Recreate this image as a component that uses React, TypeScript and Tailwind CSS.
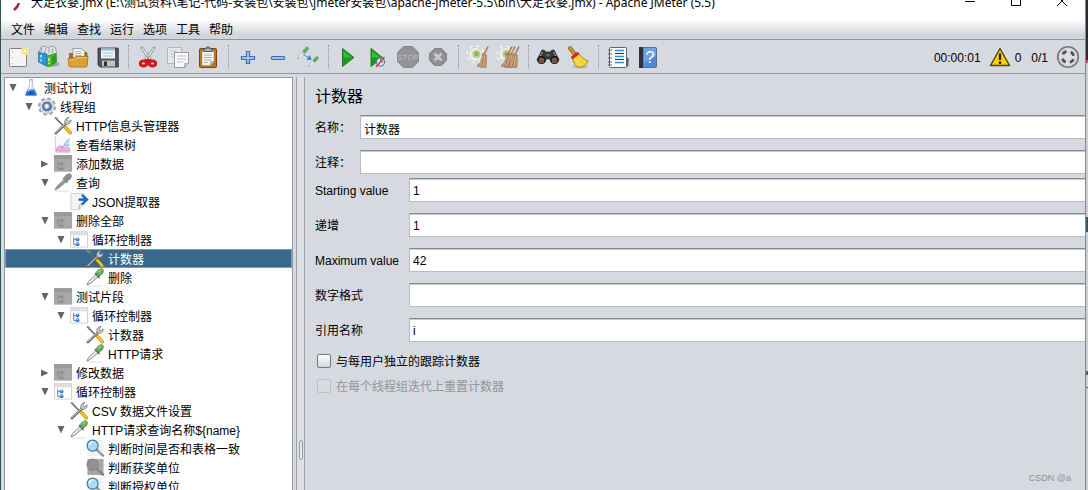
import { useState } from "react";
import type { ReactNode } from "react";
import clsx from "clsx";

type NodeIcon =
  | "flask" | "gear" | "tools" | "chart" | "folderOff" | "pipette" | "pipetteOff"
  | "extract" | "loop" | "assert" | "assertOff";

interface TreeNode {
  id: number;
  level: number;
  label: string;
  icon: NodeIcon;
  toggle?: "open" | "closed";
}

const NODES: TreeNode[] = [
  { id: 1, level: 0, label: "测试计划", icon: "flask", toggle: "open" },
  { id: 2, level: 1, label: "线程组", icon: "gear", toggle: "open" },
  { id: 3, level: 2, label: "HTTP信息头管理器", icon: "tools" },
  { id: 4, level: 2, label: "查看结果树", icon: "chart" },
  { id: 5, level: 2, label: "添加数据", icon: "folderOff", toggle: "closed" },
  { id: 6, level: 2, label: "查询", icon: "pipetteOff", toggle: "open" },
  { id: 7, level: 3, label: "JSON提取器", icon: "extract" },
  { id: 8, level: 2, label: "删除全部", icon: "folderOff", toggle: "open" },
  { id: 9, level: 3, label: "循环控制器", icon: "loop", toggle: "open" },
  { id: 10, level: 4, label: "计数器", icon: "tools" },
  { id: 11, level: 4, label: "删除", icon: "pipette" },
  { id: 12, level: 2, label: "测试片段", icon: "folderOff", toggle: "open" },
  { id: 13, level: 3, label: "循环控制器", icon: "loop", toggle: "open" },
  { id: 14, level: 4, label: "计数器", icon: "tools" },
  { id: 15, level: 4, label: "HTTP请求", icon: "pipette" },
  { id: 16, level: 2, label: "修改数据", icon: "folderOff", toggle: "closed" },
  { id: 17, level: 2, label: "循环控制器", icon: "loop", toggle: "open" },
  { id: 18, level: 3, label: "CSV 数据文件设置", icon: "tools" },
  { id: 19, level: 3, label: "HTTP请求查询名称${name}", icon: "pipette", toggle: "open" },
  { id: 20, level: 4, label: "判断时间是否和表格一致", icon: "assert" },
  { id: 21, level: 4, label: "判断获奖单位", icon: "assertOff" },
  { id: 22, level: 4, label: "判断授权单位", icon: "assert" },
];

const MENUS = ["文件", "编辑", "查找", "运行", "选项", "工具", "帮助"];

/* ---------- tree icons ---------- */

function Pipette({ off }: { off?: boolean }) {
  return (
    <>
      <path d="M2 19h15" stroke="#dcdcdc" />
      <path d="M1.500 18 3 14.500 11.500 6.500l2.300 2.300L5.500 16z" fill={off ? "#979797" : "#d5dada"} stroke={off ? "#939393" : "#7b8080"} strokeWidth=".9" />
      {!off && <path d="M4 15.500 12 8" stroke="#fff" />}
      <path d="M10 5.500 14.800 10.300" stroke={off ? "#8b8b8b" : "#5f6b5f"} strokeWidth="1.800" />
      <path d="M11 5.600c1-2.800 3-4.600 5.400-4.900 1.800 0 2.800 1.200 2.500 2.900-.4 2-2.200 3.800-4.600 5.100z" fill={off ? "#8b8b8b" : "#6aa95c"} stroke={off ? "#858585" : "#55914a"} strokeWidth=".7" />
      {!off && <path d="M13.500 4.500c1-1.200 2-1.800 3.200-2" stroke="#aadb9a" strokeWidth="1.200" />}
    </>
  );
}

function Folder({ off }: { off?: boolean }) {
  const main = off ? "#a9a9a9" : "#fdfdfd";
  const node = off ? "#8a8a8a" : "#3b7fd6";
  return (
    <>
      <rect x="1" y="1.500" width="18" height="16.500" fill={main} stroke={off ? "#a0a0a0" : "#d0d0d0"} />
      <rect x="1" y="1.500" width="18" height="4" fill={off ? "#999" : "#dcdcdc"} />
      {!off && <path d="M11 3.500h1m2 0h1m2 0h1" stroke="#fff" />}
      <path d="M4.500 7v8.500H7M4.500 10H7" fill="none" stroke={off ? "#8a8a8a" : "#777"} />
      <circle cx="8.500" cy="10" r="2" fill={node} />
      <circle cx="8.500" cy="15" r="2" fill={node} />
      <path d="M7.500 9.200h1.500M7.500 14.200h1.500" stroke={off ? "#b8b8b8" : "#a9d0ff"} />
    </>
  );
}

function Magnifier({ off }: { off?: boolean }) {
  return (
    <>
      <rect x="2" y="1" width="17" height="17" fill={off ? "#a6a6a6" : "#f1f1f1"} />
      <path d="m12 11.500 6.500 6" stroke={off ? "#858585" : "#8d8d8d"} strokeWidth="2.600" strokeLinecap="round" />
      {!off && <path d="m13 12 5 5" stroke="#d0d0d0" strokeWidth=".8" />}
      <circle cx="7.500" cy="7" r="5.800" fill={off ? "#929292" : "#a4dcfa"} stroke={off ? "#858585" : "#44719e"} strokeWidth="1.200" />
      {!off && <path d="M4 7c0-2.500 1.500-3.800 4-4" fill="none" stroke="#e9f8ff" strokeWidth="1.600" />}
    </>
  );
}

const TREE_ICONS: Record<NodeIcon, ReactNode> = {
  flask: (
    <>
      <path d="M8 1.500h4M8.500 2v6L4 17.500q0 1 1 1h10q1 0 1-1L11.500 8V2z" fill="#e6edf5" stroke="#a3afbd" strokeWidth=".8" />
      <path d="M6.700 11.500h6.700l2.600 6q0 1-.8 1H5q-1 0-.8-1z" fill="#2279d4" />
      <path d="M6.700 11.500h6.700l.6 1.500H6z" fill="#79b7f3" />
      <ellipse cx="10" cy="16" rx="3" ry="1.500" fill="#1556ab" />
      <path d="M9.500 3v6L7 14" fill="none" stroke="#fff" />
    </>
  ),
  gear: (
    <>
      <circle cx="10" cy="10" r="8" fill="none" stroke="#a3a8b0" strokeWidth="3.200" strokeDasharray="3.600 2.683" />
      <circle cx="10" cy="10" r="7.500" fill="#dcdee3" stroke="#b0b4bb" strokeWidth=".8" />
      <circle cx="10" cy="10" r="4.500" fill="#6d8bb8" stroke="#3f5c8a" strokeWidth="1.200" />
      <circle cx="9.500" cy="9.500" r="2.400" fill="#c9d7ed" />
      <path d="m8.800 7.500 3.400 2.500-3.400 2.500z" fill="#fff" />
    </>
  ),
  tools: (
    <>
      <path d="m2 2 9 9" stroke="#6a6a6a" strokeWidth="1.600" />
      <path d="m1.500 1.500 3 2" stroke="#8d8d8d" strokeWidth="2" />
      <path d="M2.500 18 14 7" stroke="#5c5c5c" strokeWidth="2.800" strokeLinecap="round" />
      <path d="M2.500 17.500 14 6.500" stroke="#c4c4c4" strokeWidth="1.200" strokeLinecap="round" />
      <path d="M12.500 8.500c-2-3 .5-7 4-7L14.300 4l1.700 2 2.500-2c.7 3.300-2.700 5.800-6 4.500z" fill="#c6c6c6" stroke="#7a7a7a" strokeWidth=".8" />
      <path d="m12.500 12 5 5.500" stroke="#a77d00" strokeWidth="3.600" strokeLinecap="round" />
      <path d="m12.500 12 5 5.500" stroke="#f5c31d" strokeWidth="2.500" strokeLinecap="round" />
    </>
  ),
  chart: (
    <>
      <rect x="2" y="1" width="16" height="17" fill="#f8f8fc" />
      <path d="M2 1v17.500h16" fill="none" stroke="#a9a9b8" strokeDasharray="1 1" />
      <path d="M3 17v-3l4-3 3 2.500 3-3 4 4V17z" fill="#efb0de" stroke="#d17cbf" strokeWidth=".8" />
      <path d="M10 12c3-2 3-6 7-7v7l-2 1z" fill="#d3e0fb" />
      <path d="M8 13.500c4-1 4-8 9-9M12.500 10.500q2 2 4-1" fill="none" stroke="#7f9bdc" strokeWidth="1" />
    </>
  ),
  folderOff: <Folder off />,
  loop: <Folder />,
  pipette: <Pipette />,
  pipetteOff: <Pipette off />,
  assert: <Magnifier />,
  assertOff: <Magnifier off />,
  extract: (
    <>
      <path d="M1.500 1.500h14v11l-5 6h-9z" fill="#f3f3f3" stroke="#cecece" />
      <path d="m10 18.500.5-5 4.500-1" fill="#e4e4e4" stroke="#b4b4b4" />
      <path d="M9.500 8h7" stroke="#1768bd" strokeWidth="2.600" />
      <path d="m13 3 5.500 5-5.500 5" fill="none" stroke="#1768bd" strokeWidth="2.400" />
    </>
  ),
};

/* ---------- toolbar icons ---------- */

function Broom({ x = 0 }: { x?: number }) {
  return (
    <g transform={`translate(${x} 0)`}>
      <path d="m19 1.500-4 8" stroke="#a87845" strokeWidth="1.500" />
      <path d="m13.500 8.500 4 1.500-.5 12.500q-5 .5-9-1.500c3.500-3 5-7 5.500-12.500z" fill="#b8926c" stroke="#98734f" strokeWidth=".6" />
      <path d="M14 11 11 21M15.500 11l-1.500 10.500" stroke="#d8b891" strokeWidth=".9" />
      <path d="m14.800 11-2.500 10" stroke="#8d673f" strokeWidth=".6" />
    </g>
  );
}

function PaleGear() {
  return (
    <>
      <circle cx="9.500" cy="9.500" r="7.500" stroke="#f5f6f5" strokeWidth="3" strokeDasharray="3.400 2.490" />
      <circle cx="9.500" cy="9.500" r="7.200" fill="#eceeec" stroke="#bdbfbd" strokeWidth=".7" />
      <circle cx="10.500" cy="9" r="3.600" fill="#cfe3b5" stroke="#9fa59a" strokeWidth=".7" />
      <circle cx="10.500" cy="9" r="2.400" fill="#7cc52d" />
    </>
  );
}

const TOOLS: { title: string; disabled?: boolean; art: ReactNode }[][] = [
  [
    {
      title: "新建",
      art: (
        <>
          <rect x="3.500" y="3.500" width="17" height="18" rx="1" fill="#f5f5f5" stroke="#7d7f82" />
          <path d="M6.500 6v1m0 5v1m0 5v1" stroke="#b5b5b5" />
          <circle cx="19" cy="6" r="4" fill="#f3eba0" />
          <circle cx="19" cy="6" r="2" fill="#fffef0" stroke="#ecd94c" />
        </>
      ),
    },
    {
      title: "模板",
      art: (
        <>
          <ellipse cx="17" cy="19" rx="6.500" ry="2.500" fill="#9da1a8" />
          <path d="m3 8 2-6 5-1 2 2 3-2 4 1 2 6-9 4z" fill="#dfe4e6" stroke="#8e959a" strokeWidth=".8" />
          <path d="m6 3-1 4m5-4-1 4m4-4v5m4-5-1 5" stroke="#98a0a5" />
          <path d="m2.500 7 4.500 1.500 1-1 3 1.500v12l-3-1-5.500-3z" fill="#2797d9" stroke="#1a73ad" strokeWidth=".7" />
          <path d="M5 10v2.500m0 2v2" stroke="#d9effb" strokeWidth="1.500" />
          <path d="m11 11 4.500-1.500L20 8.500l.5 8-6 5H11z" fill="#4fbf30" stroke="#2b8c1d" strokeWidth=".7" />
          <path d="m15.500 12 5-3.500v8.500l-5 4z" fill="#2f9c20" />
          <path d="M13 13v3m0 1.500v1.500" stroke="#e0f7d8" strokeWidth="1.300" />
        </>
      ),
    },
    {
      title: "打开",
      art: (
        <>
          <path d="M3.500 8.500h4l1-1H20q1 0 1 1V20H3.500z" fill="#a66f13" stroke="#875707" strokeWidth=".7" />
          <path d="M7 3.500h8l3.500 3V13H7z" fill="#f5f5f5" stroke="#8e8e8e" strokeWidth=".8" />
          <path d="M9 6.500h6m-6 2h7m-7 2h7" stroke="#b6b6b6" />
          <path d="M2 13.500h6l1.500-2H22l-1 9.500q0 1-1 1H4q-1 0-1-1z" fill="#dea035" stroke="#a8730f" strokeWidth=".8" />
          <path d="M3 14.700h5.500l1.500-2h10.500" stroke="#f3c775" />
        </>
      ),
    },
    {
      title: "保存",
      art: (
        <>
          <path d="M3 3h18.500q.8 0 .8.8V22H4l-2-2V3.800Q2 3 3 3z" fill="#505358" stroke="#2c2e31" strokeWidth=".8" />
          <rect x="5" y="3.500" width="14" height="10" fill="#edf3f8" />
          <path d="M5 4.500h14" stroke="#8bbbe5" strokeWidth="2" />
          <path d="M7 8h10m-10 3h10" stroke="#b0bfcb" />
          <rect x="6" y="15.500" width="13" height="6" fill="#bfc2c6" />
          <rect x="8" y="16.500" width="3" height="4.500" fill="#2e3033" />
        </>
      ),
    },
  ],
  [
    {
      title: "剪切",
      art: (
        <>
          <path d="m4.500 2.500 8.500 13 2.500-1.500L6.500 2z" fill="#ececec" stroke="#858585" strokeWidth=".8" />
          <path d="m19.500 2.500-8.500 13-2.500-1.500L17.500 2z" fill="#e2e2e2" stroke="#858585" strokeWidth=".8" />
          <circle cx="12" cy="12" r=".8" fill="#777" />
          <path d="m8 15 4-1.500 4 1.500-4 2.500z" fill="#d3161e" />
          <ellipse cx="7.500" cy="18.500" rx="3.200" ry="2.600" stroke="#d3161e" strokeWidth="3" />
          <ellipse cx="16.500" cy="18.500" rx="3.200" ry="2.600" stroke="#d3161e" strokeWidth="3" />
        </>
      ),
    },
    {
      title: "复制",
      art: (
        <>
          <path d="M1.500 2.500h14v16h-14z" fill="#e6e8eb" stroke="#a7a9ad" strokeWidth=".8" />
          <path d="M4 6h7m-7 3h5m-5 3h4" stroke="#bfc2c6" />
          <path d="M8.500 7.500h14v11l-4 4h-10z" fill="#fafafa" stroke="#848688" strokeWidth=".8" />
          <path d="M11 11h9m-9 3h9m-9 3h6" stroke="#bdbdbd" />
          <path d="M18.500 22.500v-4h4z" fill="#d4d4d4" stroke="#8a8a8a" strokeWidth=".6" />
        </>
      ),
    },
    {
      title: "粘贴",
      art: (
        <>
          <rect x="3.500" y="3.500" width="17" height="19" rx="1" fill="#b87620" stroke="#77460d" />
          <path d="M6 6h12v10.500l-4 4H6z" fill="#f7f7f7" stroke="#8b8b8b" strokeWidth=".5" />
          <path d="M8 10h8m-8 2.500h8M8 15h7m-7 2.500h4" stroke="#aaa" />
          <path d="M14 20.500v-4h4z" fill="#ccc" stroke="#999" strokeWidth=".5" />
          <path d="M7.500 6.500V4h2l1-2h3l1 2h2v2.500z" fill="#8b8c87" stroke="#50514e" strokeWidth=".8" />
          <path d="M8.500 5h7" stroke="#c5c6c2" />
        </>
      ),
    },
  ],
  [
    {
      title: "展开",
      art: <path d="M10.500 6.500h3v5h5v3h-5v4h-3v-4h-5v-3h5z" fill="#9cc3e8" stroke="#3c6fae" strokeWidth="1.200" />,
    },
    {
      title: "折叠",
      art: <rect x="5.500" y="11.500" width="13" height="3" rx="1" fill="#9cc3e8" stroke="#3c6fae" strokeWidth="1.200" />,
    },
    {
      title: "切换",
      art: (
        <>
          <path d="m3 12 5-5" stroke="#b9c1bb" strokeWidth="2.200" />
          <path d="m3.500 12 5-5" stroke="#f3f5f3" strokeWidth="1.200" />
          <path d="m8.500 6.500 2.500-3" stroke="#6aa865" strokeWidth="3.600" strokeLinecap="round" />
          <path d="m1.500 14 1.500-2" stroke="#9ba09d" />
          <path d="m14 20 4.500-4" stroke="#b9c1bb" strokeWidth="2.200" />
          <path d="m14.500 20 4-4" stroke="#f3f5f3" strokeWidth="1.200" />
          <path d="m18.500 15.500 2.500-2.500" stroke="#6aa865" strokeWidth="3.600" strokeLinecap="round" />
          <path d="m12 22 2-2" stroke="#9ba09d" />
          <path d="m7.500 9.500 6 3.500" stroke="#3d88ec" strokeWidth="1.400" strokeDasharray="2 1" />
          <path d="m10.500 14.500 5 .5-1.500-5z" fill="#2e78e0" />
        </>
      ),
    },
  ],
  [
    {
      title: "启动",
      art: (
        <>
          <path d="M6.500 3.500 18 12.500 6.500 21.500z" fill="#189d1a" stroke="#0d6d12" strokeWidth=".8" />
          <path d="M7.500 6v6.500h8z" fill="#3fb83a" />
        </>
      ),
    },
    {
      title: "不停顿开始",
      art: (
        <>
          <path d="M5 3.500 16.500 12.500 5 21.500z" fill="#189d1a" stroke="#0d6d12" strokeWidth=".8" />
          <path d="M6 6v6.500h8z" fill="#3fb83a" />
          <circle cx="14.500" cy="17" r="4" fill="#dfe9f5" stroke="#5276a5" strokeWidth="1.200" />
          <path d="M14.500 14v3H17" stroke="#555" strokeWidth=".8" />
          <path d="m10 22 8.500-10" stroke="#d2383d" strokeWidth="1.400" />
        </>
      ),
    },
    {
      title: "停止",
      disabled: true,
      art: (
        <>
          <path d="M7.500 1.500h9l6 6v9l-6 6h-9l-6-6v-9z" fill="#919396" stroke="#85878a" />
          <text x="12" y="15" textAnchor="middle" fontSize="8" fontWeight="400" fill="#bfc1c4">STOP</text>
        </>
      ),
    },
    {
      title: "关闭",
      disabled: true,
      art: (
        <>
          <path d="M8.500 3.500h7l5 5v7l-5 5h-7l-5-5v-7z" fill="#8e9093" stroke="#838588" />
          <path d="m8.500 8.500 7 7m0-7-7 7" stroke="#c5c7ca" strokeWidth="2.800" />
        </>
      ),
    },
  ],
  [
    { title: "清除", art: <><PaleGear /><Broom x={3} /></> },
    { title: "清除全部", art: <><PaleGear /><Broom x={-3} /><Broom /><Broom x={4} /></> },
  ],
  [
    {
      title: "查找",
      art: (
        <>
          <path d="M5 7q0-2 2-2t2.500 2h5Q15 5 17 5t2 2l4 8q-3 5-8 2l-1-3h-4l-1 3q-5 3-8-2z" fill="#3b3c40" stroke="#1d1e20" strokeWidth=".7" />
          <circle cx="5.500" cy="15" r="4" fill="#18181a" />
          <circle cx="18.500" cy="15" r="4" fill="#18181a" />
          <circle cx="5.500" cy="15.500" r="2.400" fill="#93461b" stroke="#777" strokeWidth=".8" />
          <circle cx="18.500" cy="15.500" r="2.400" fill="#93461b" stroke="#777" strokeWidth=".8" />
          <path d="m6.500 7-2.500 4m13.500-4 2.500 4m-9.500-1h3" stroke="#a5a5a5" />
        </>
      ),
    },
    {
      title: "重置搜索",
      art: (
        <>
          <ellipse cx="14" cy="21.500" rx="8" ry="1.800" fill="#b5b8bf" />
          <path d="m4 3 4.500 6" stroke="#8c5b16" strokeWidth="4" strokeLinecap="round" />
          <path d="m4 3 4.500 6" stroke="#cf9a43" strokeWidth="2.400" strokeLinecap="round" />
          <path d="m6.500 13 6-4.500c2.500 3.500 6 6 9.500 7.500-1 3.500-4.500 6-9 6.500C9 21 7 17 6.500 13z" fill="#f0d02e" stroke="#ac8500" strokeWidth=".9" />
          <path d="m9 14 4 7m-2-8 5 7m-3-9 6 7" stroke="#f9ec8a" strokeWidth=".8" />
          <path d="m5 12 6.500-5 1.700 2-6.700 5z" fill="#d42a24" stroke="#a31713" strokeWidth=".4" />
        </>
      ),
    },
  ],
  [
    {
      title: "函数助手",
      art: (
        <>
          <path d="M18 17h4.500v4.500H18z" fill="#26912a" />
          <path d="M18 13h4.500v4H18z" fill="#2456af" />
          <rect x="3.500" y="2.500" width="17" height="20" rx="1" fill="#fafafa" stroke="#5d6268" />
          <path d="M2 5h4M2 9h4m-4 4h4m-4 4h4m-4 3h4" stroke="#666" strokeWidth="1.200" />
          <path d="M9 5.500h9M9 11.500h9M9 17.500h9" stroke="#3f87de" strokeWidth="1.400" />
          <path d="M9 8.500h9M9 14.500h9" stroke="#333" />
        </>
      ),
    },
    {
      title: "帮助",
      art: (
        <>
          <rect x="3.500" y="2.500" width="17" height="20" rx="1" fill="#4c8ad6" stroke="#4d6f99" />
          <path d="M3 2h4v21H3z" fill="#2a323e" />
          <path d="M8 3h12v8L8 18z" fill="#6ca3e4" />
          <text x="14" y="18" textAnchor="middle" fontSize="16" fill="#fff">?</text>
        </>
      ),
    },
  ],
];

function Field({ label, value, wide }: { label: string; value?: string; wide?: boolean }) {
  return (
    <label className="flex h-6 items-center">
      <span className={clsx("shrink-0 pt-0.5 whitespace-nowrap", wide ? "w-[94px]" : "w-[45px]")}>{label}</span>
      <input
        type="text"
        defaultValue={value}
        className="h-6 min-w-0 flex-1 border border-r-0 border-[#b8bbc0] border-t-[#85888d] bg-white px-[3px] pt-0.5 shadow-[inset_0_1px_0_#c8cacd] outline-none"
      />
    </label>
  );
}

function Tree() {
  const [selected, setSelected] = useState(10);
  const [closed, setClosed] = useState<number[]>(NODES.filter((n) => n.toggle === "closed").map((n) => n.id));

  function toggle(id: number) {
    setClosed((c) => (c.includes(id) ? c.filter((x) => x !== id) : [...c, id]));
  }

  // drop everything nested below a closed node
  let limit = Infinity;
  const visible = NODES.filter((n) => {
    if (n.level > limit) return false;
    limit = closed.includes(n.id) ? n.level : Infinity;
    return true;
  });

  return (
    <ul className="min-h-0 w-[289px] shrink-0 overflow-hidden border border-b-0 border-[#9297a1] bg-white">
      {visible.map((n) => (
        <li
          key={n.id}
          className={clsx(
            "flex h-[19px] items-center border",
            n.id === selected ? "border-[#6f9fce] bg-[#39698a] text-white" : "border-transparent"
          )}
        >
          <span className="shrink-0" style={{ width: n.level * 16 }} />
          {n.toggle ? (
            <button aria-label={n.label} onClick={() => toggle(n.id)} className="flex w-[15px] shrink-0 justify-center pr-0.5">
              <svg viewBox="0 0 8 8" className={clsx("h-2 w-2", closed.includes(n.id) && "-rotate-90")}>
                <path d="M.5 0h7L4 7.500z" fill="#626468" />
              </svg>
            </button>
          ) : (
            <span className="w-[15px] shrink-0" />
          )}
          <button onClick={() => setSelected(n.id)} className="flex items-center gap-[3px] whitespace-nowrap">
            <svg viewBox="0 0 20 20" className="h-[19px] w-5 shrink-0">{TREE_ICONS[n.icon]}</svg>
            <span className="pt-0.5">{n.label}</span>
          </button>
        </li>
      ))}
    </ul>
  );
}

export default function App() {
  return (
    <div className="flex h-screen overflow-hidden bg-[#d6d9e0] font-['Liberation_Sans','Noto_Sans_CJK_SC',sans-serif] text-xs leading-4 text-black">
      {/* edge of the desktop behind the window */}
      <div className="w-px shrink-0 bg-[#2d5552]" />

      <div className="flex min-w-0 flex-1 flex-col border-r border-[#85888d]">
        <header className="flex h-[17px] shrink-0 items-end justify-between overflow-hidden bg-white">
          <div className="flex min-w-0 items-end gap-2.5 pb-1.5 pl-3 font-['Noto_Sans','Noto_Sans_CJK_SC',sans-serif]">
            <svg viewBox="0 0 8 8" className="h-2 w-2 shrink-0">
              <path d="M6 0 4 4 1 7" fill="none" stroke="#a51b4c" strokeWidth="2.500" />
            </svg>
            <h1 className="whitespace-nowrap">
              大足衣婺.jmx (E:\测试资料\笔记-代码-安装包\安装包\jmeter安装包\apache-jmeter-5.5\bin\大足衣婺.jmx) - Apache JMeter (5.5)
            </h1>
          </div>
          <div className="flex items-end gap-9 pr-[18px] pb-2.5">
            <button aria-label="最小化">
              <svg viewBox="0 0 10 12" className="h-3 w-2.5"><path d="M0 6.500h10" stroke="#000" /></svg>
            </button>
            <button aria-label="最大化">
              <svg viewBox="0 0 10 12" className="h-3 w-2.5"><path d="M.5 1.500h9v9h-9z" fill="none" stroke="#000" /></svg>
            </button>
            <button aria-label="关闭窗口">
              <svg viewBox="0 0 10 12" className="h-3 w-2.5"><path d="m0 1 10 10m0-10L0 11" stroke="#000" /></svg>
            </button>
          </div>
        </header>

        <nav className="flex h-[23px] shrink-0 items-center gap-[9px] border-b border-[#9297a1] bg-linear-to-b from-white from-10% to-[#d2d6dc] to-80% pt-[3px] pl-2.5">
          {MENUS.map((m) => (
            <button key={m}>{m}</button>
          ))}
        </nav>

        {/* Toolbar */}
        <div className="flex h-[34px] shrink-0 items-center border-b border-[#9297a1] pl-0.5">
          {TOOLS.map((group, i) => (
            <div key={i} className="flex items-center">
              {i > 0 && <div className="mr-1 ml-[5px] h-6 border-l border-dotted border-[#8e939c]" />}
              {group.map((t) => (
                <button key={t.title} title={t.title} disabled={t.disabled} className="flex w-[30px] justify-center">
                  <svg viewBox="0 0 24 24" fill="none" className="h-6 w-6">{t.art}</svg>
                </button>
              ))}
            </div>
          ))}
          <div className="ml-auto flex items-center pr-[5px]">
            <span className="pt-0.5">00:00:01</span>
            <button title="日志" className="ml-2 flex items-center gap-1">
              <svg viewBox="0 0 22 20" className="h-5 w-[22px]">
                <path d="M11 1.500 20.500 18.500h-19z" fill="#f6cf00" stroke="#4d4200" strokeWidth="1.400" strokeLinejoin="round" />
                <path d="M11 6.500v6.500M11 14.500V17" stroke="#1f1c00" strokeWidth="2.200" />
              </svg>
              <span className="pt-0.5">0</span>
            </button>
            <span className="mr-2 ml-2.5 pt-0.5">0/1</span>
            <svg viewBox="0 0 24 24" className="h-6 w-6">
              <circle cx="12" cy="12" r="10.300" fill="#c9cacb" stroke="#77797b" strokeWidth="1.600" />
              <circle cx="12" cy="12" r="9" fill="#dcddde" />
              <circle cx="12" cy="12" r="5.800" fill="none" stroke="#505254" strokeWidth="2.800" strokeDasharray="4.600 4.511" strokeDashoffset="-2.250" />
            </svg>
          </div>
        </div>

        <div className="flex min-h-0 flex-1 pt-[3px] pl-[3px]">
          <Tree />

          {/* Split handle */}
          <div className="ml-[3px] flex w-[9px] shrink-0 items-end justify-center border-x border-[#9ba0aa] bg-[#dde0e6] pb-[30px]">
            <div className="h-5 w-1 rounded-xs border border-[#969ba6] bg-[#e6e8ec]" />
          </div>

          <main className="relative flex min-w-0 flex-1 flex-col pl-2.5">
            <h2 className="mt-[9px] mb-[7px] text-base leading-[22px]">计数器</h2>
            <div className="flex flex-col gap-[11px]">
              <Field label="名称：" value="计数器" />
              <Field label="注释：" />
            </div>
            <div className="mt-1 flex flex-col gap-[11px]">
              <Field wide label="Starting value" value="1" />
              <Field wide label="递增" value="1" />
              <Field wide label="Maximum value" value="42" />
              <Field wide label="数字格式" />
              <Field wide label="引用名称" value="i" />
            </div>
            <div className="mt-2.5 flex flex-col gap-[7px] pl-0.5">
              <label className="flex items-center gap-[5px]">
                <input type="checkbox" className="h-3.5 w-3.5 appearance-none rounded-xs border border-[#747880] bg-linear-to-b from-white to-[#d4d7dc]" />
                <span className="pt-0.5">与每用户独立的跟踪计数器</span>
              </label>
              <label className="flex items-center gap-[5px] text-[#92959b]">
                <input type="checkbox" disabled className="h-3.5 w-3.5 appearance-none rounded-xs border border-[#bcbfc5] bg-[#d9dbe0]" />
                <span className="pt-0.5">在每个线程组迭代上重置计数器</span>
              </label>
            </div>
            <span className="absolute right-3.5 bottom-1 text-[9px] text-[#8f9298]">CSDN @a</span>
          </main>
        </div>
      </div>

      {/* window peeking out on the right */}
      <div className="flex w-0.5 shrink-0 flex-col bg-[#cfcfcf]">
        <div className="h-[60px] bg-[#2b2b2b]" />
        <div className="h-[3px] bg-[#d8482a]" />
        <div className="mt-[154px] h-[15px] bg-[#2b5876]" />
        <div className="mt-[139px] h-1 bg-[#6b5a4b]" />
        <div className="mt-3 h-px bg-[#666]" />
      </div>
    </div>
  );
}
